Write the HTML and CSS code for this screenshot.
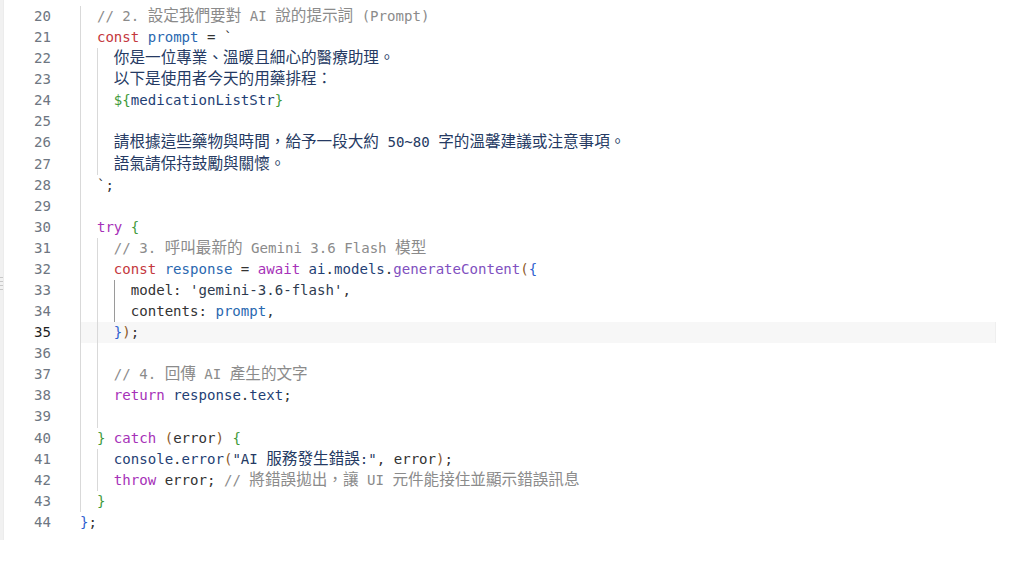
FILE: index.html
```html
<!DOCTYPE html>
<html lang="zh-Hant">
<head>
<meta charset="utf-8">
<title>Editor</title>
<link rel="stylesheet" href="styles.css">
</head>
<body>
<div class="editor">
  <div class="strip"><div class="sash"></div></div>
  <div class="main">
    <div class="row"><span class="ln">20</span><span class="code"><span class="ig"></span><span class="c">// 2. <span class="cj">設定我們要對</span> AI <span class="cj">說的提示詞</span> (Prompt)</span></span></div>
    <div class="row"><span class="ln">21</span><span class="code"><span class="ig"></span><span class="s">const</span> <span class="v">prompt</span> <span class="o">=</span> <span class="o">`</span></span></div>
    <div class="row"><span class="ln">22</span><span class="code"><span class="ig"></span><span class="ig"></span><span class="t"><span class="cj">你是一位專業、溫暖且細心的醫療助理。</span></span></span></div>
    <div class="row"><span class="ln">23</span><span class="code"><span class="ig"></span><span class="ig"></span><span class="t"><span class="cj">以下是使用者今天的用藥排程：</span></span></span></div>
    <div class="row"><span class="ln">24</span><span class="code"><span class="ig"></span><span class="ig"></span><span class="b2">${</span><span class="n">medicationListStr</span><span class="b2">}</span></span></div>
    <div class="row"><span class="ln">25</span><span class="code"><span class="ig"></span><span class="ig"></span></span></div>
    <div class="row"><span class="ln">26</span><span class="code"><span class="ig"></span><span class="ig"></span><span class="t"><span class="cj">請根據這些藥物與時間，給予一段大約</span> 50~80 <span class="cj">字的溫馨建議或注意事項。</span></span></span></div>
    <div class="row"><span class="ln">27</span><span class="code"><span class="ig"></span><span class="ig"></span><span class="t"><span class="cj">語氣請保持鼓勵與關懷。</span></span></span></div>
    <div class="row"><span class="ln">28</span><span class="code"><span class="ig"></span><span class="o">`;</span></span></div>
    <div class="row"><span class="ln">29</span><span class="code"><span class="ig"></span></span></div>
    <div class="row"><span class="ln">30</span><span class="code"><span class="ig"></span><span class="k">try</span> <span class="b2">{</span></span></div>
    <div class="row"><span class="ln">31</span><span class="code"><span class="ig"></span><span class="ig"></span><span class="c">// 3. <span class="cj">呼叫最新的</span> Gemini 3.6 Flash <span class="cj">模型</span></span></span></div>
    <div class="row"><span class="ln">32</span><span class="code"><span class="ig"></span><span class="ig"></span><span class="s">const</span> <span class="v">response</span> <span class="o">=</span> <span class="k">await</span> <span class="n">ai</span><span class="o">.</span><span class="n">models</span><span class="o">.</span><span class="f">generateContent</span><span class="b3">(</span><span class="b1">{</span></span></div>
    <div class="row"><span class="ln">33</span><span class="code"><span class="ig"></span><span class="ig"></span><span class="ig act"></span><span class="pr">model</span><span class="o">:</span> <span class="str">'gemini-3.6-flash'</span><span class="o">,</span></span></div>
    <div class="row"><span class="ln">34</span><span class="code"><span class="ig"></span><span class="ig"></span><span class="ig act"></span><span class="pr">contents</span><span class="o">:</span> <span class="v">prompt</span><span class="o">,</span></span></div>
    <div class="row active"><span class="ln">35</span><span class="code"><span class="ig"></span><span class="ig"></span><span class="b1">}</span><span class="b3">)</span><span class="o">;</span></span></div>
    <div class="row"><span class="ln">36</span><span class="code"><span class="ig"></span><span class="ig"></span></span></div>
    <div class="row"><span class="ln">37</span><span class="code"><span class="ig"></span><span class="ig"></span><span class="c">// 4. <span class="cj">回傳</span> AI <span class="cj">產生的文字</span></span></span></div>
    <div class="row"><span class="ln">38</span><span class="code"><span class="ig"></span><span class="ig"></span><span class="k">return</span> <span class="n">response</span><span class="o">.</span><span class="n">text</span><span class="o">;</span></span></div>
    <div class="row"><span class="ln">39</span><span class="code"><span class="ig"></span><span class="ig"></span></span></div>
    <div class="row"><span class="ln">40</span><span class="code"><span class="ig"></span><span class="b2">}</span> <span class="k">catch</span> <span class="b3">(</span><span class="pr">error</span><span class="b3">)</span> <span class="b2">{</span></span></div>
    <div class="row"><span class="ln">41</span><span class="code"><span class="ig"></span><span class="ig"></span><span class="n">console</span><span class="o">.</span><span class="n">error</span><span class="b3">(</span><span class="t">"AI <span class="cj">服務發生錯誤</span>:"</span><span class="o">,</span> <span class="pr">error</span><span class="b3">)</span><span class="o">;</span></span></div>
    <div class="row"><span class="ln">42</span><span class="code"><span class="ig"></span><span class="ig"></span><span class="k">throw</span> <span class="pr">error</span><span class="o">;</span> <span class="c">// <span class="cj">將錯誤拋出，讓</span> UI <span class="cj">元件能接住並顯示錯誤訊息</span></span></span></div>
    <div class="row"><span class="ln">43</span><span class="code"><span class="ig"></span><span class="b2">}</span></span></div>
    <div class="row"><span class="ln">44</span><span class="code"><span class="b1">}</span><span class="o">;</span></span></div>
  </div>
</div>
</body>
</html>
```
FILE: styles.css
```css
html, body {
  margin: 0;
  padding: 0;
  background: #ffffff;
}

.editor {
  position: relative;
  display: flex;
  height: 540px;
  font-family: "DejaVu Sans Mono", "Noto Sans CJK TC", monospace;
  font-size: 14.07px;
  color: #333333;
}

.strip {
  width: 3px;
  flex: none;
  background: #f1f1f1;
  border-right: 1px solid #ececec;
}

.sash {
  position: absolute;
  left: 0;
  top: 277px;
  width: 3px;
  height: 14px;
  background: repeating-linear-gradient(to bottom, #c8c8c8 0, #c8c8c8 1px, transparent 1px, transparent 4px);
}

.main {
  flex: 1;
  padding-top: 6px;
}

.row {
  display: flex;
  height: 21.08px;
  line-height: 21.08px;
}

.ln {
  flex: none;
  width: 47px;
  text-align: right;
  color: #6e7681;
}

.row.active .ln {
  color: #1f1f1f;
}

.code {
  display: block;
  flex: none;
  width: 916px;
  height: 21.08px;
  margin-left: 29px;
  white-space: pre;
  box-sizing: border-box;
}

.row.active .code {
  background: #f7f7f7;
  border-right: 1px solid #efefef;
}

.ig {
  display: inline-block;
  width: 2ch;
  height: 21.08px;
  vertical-align: top;
  box-sizing: border-box;
  border-left: 1px solid #d9d9d9;
}

.ig.act {
  border-left-color: #9a9a9a;
}

.cj {
  font-family: "Noto Sans CJK TC", sans-serif;
  font-size: 15.6px;
  font-weight: 400;
  line-height: 1;
}

.c { color: #8b8b8b; }
.s { color: #c4383d; }
.v { color: #2a68b0; }
.n { color: #1f3f75; }
.t { color: #253a63; }
.str { color: #2e3a4e; }
.k { color: #a631b8; }
.f { color: #8050c0; }
.pr { color: #333333; }
.o { color: #333333; }
.b1 { color: #2f5fd0; }
.b2 { color: #3f9a3a; }
.b3 { color: #8d5a2a; }
```
